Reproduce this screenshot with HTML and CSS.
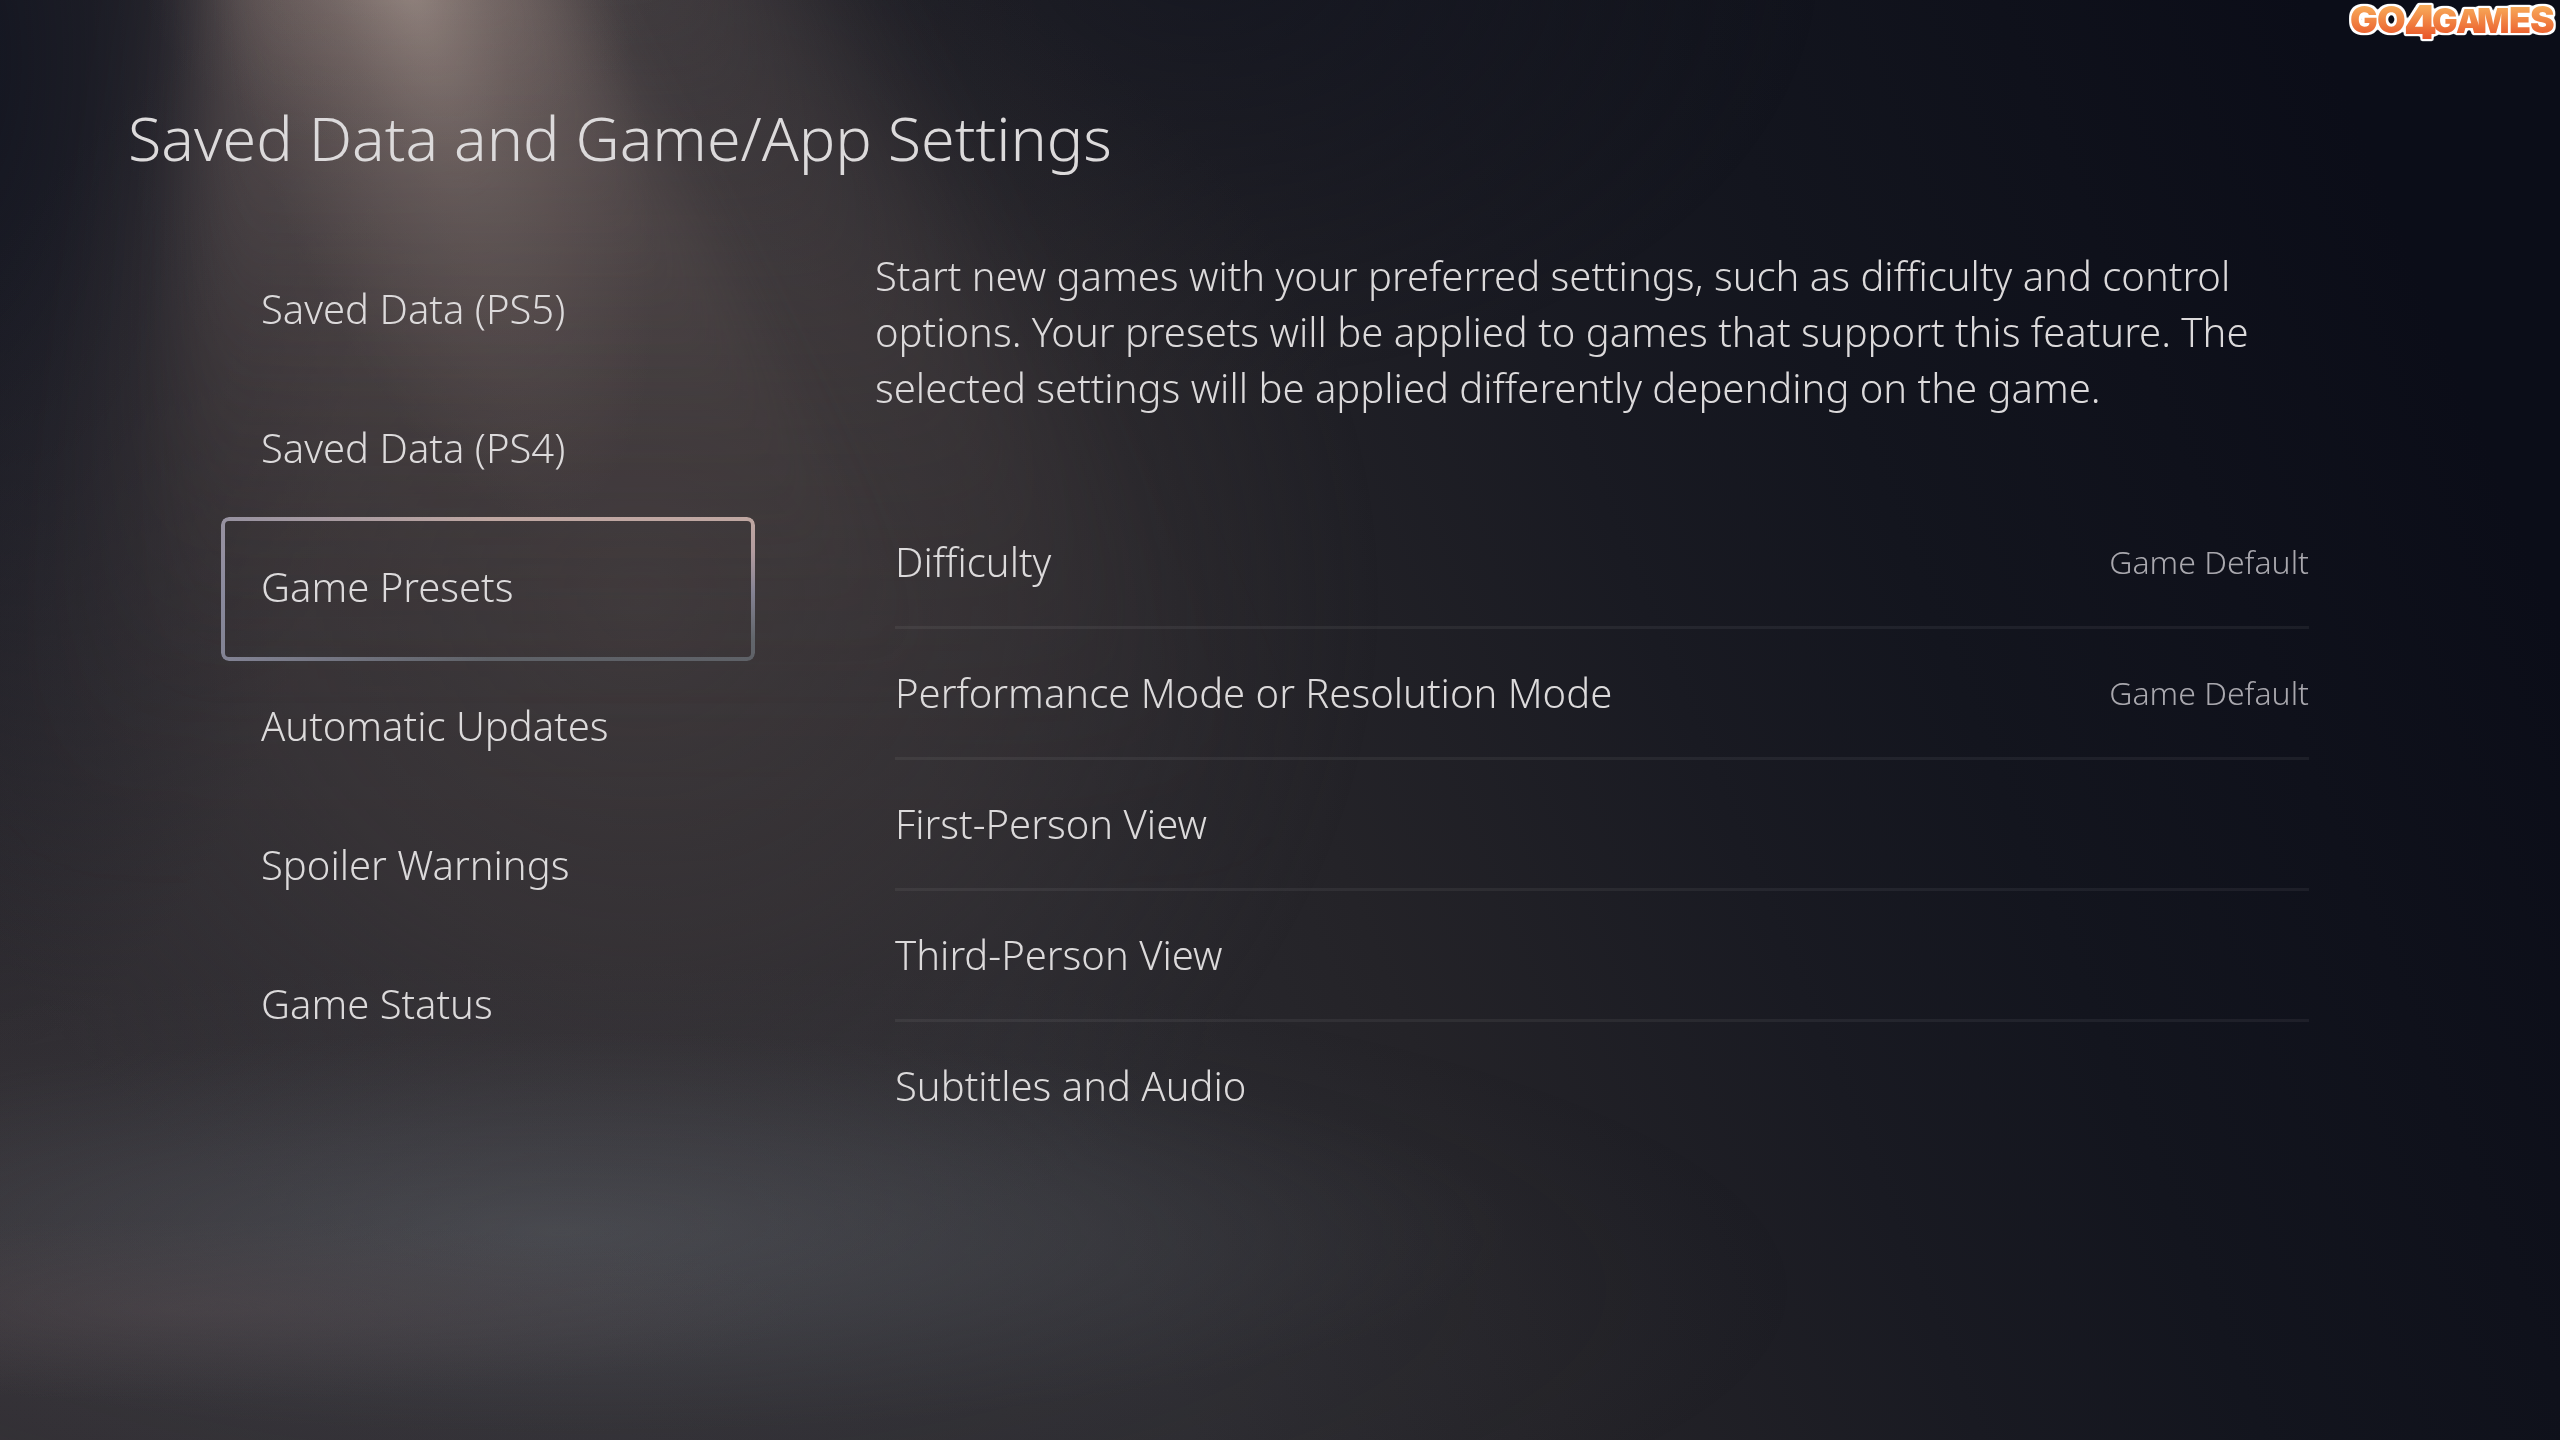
FILE: index.html
```html
<!DOCTYPE html>
<html lang="en">
<head>
<meta charset="utf-8">
<title>Saved Data and Game/App Settings</title>
<link rel="stylesheet" href="styles.css">
</head>
<body>
<svg class="backdrop" viewBox="0 0 2560 1440" preserveAspectRatio="none" aria-hidden="true">
  <defs>
    <filter id="soft" filterUnits="userSpaceOnUse" x="-600" y="-600" width="3600" height="2600" color-interpolation-filters="sRGB"><feGaussianBlur stdDeviation="32"/></filter>
    <filter id="wide" filterUnits="userSpaceOnUse" x="-600" y="-600" width="3600" height="2600" color-interpolation-filters="sRGB"><feGaussianBlur stdDeviation="60"/></filter>
    <linearGradient id="beam" x1="0" y1="0" x2="0" y2="1">
      <stop offset="0" stop-color="#a08c86" stop-opacity=".5"/>
      <stop offset=".4" stop-color="#8a7773" stop-opacity=".3"/>
      <stop offset=".7" stop-color="#6a5b57" stop-opacity=".14"/>
      <stop offset="1" stop-color="#5a5050" stop-opacity="0"/>
    </linearGradient>
    <radialGradient id="lamp"><stop offset="0" stop-color="#d2beb2" stop-opacity=".42"/><stop offset=".4" stop-color="#b8a298" stop-opacity=".22"/><stop offset="1" stop-color="#a08880" stop-opacity="0"/></radialGradient>
    <radialGradient id="floor"><stop offset="0" stop-color="#6a6f76" stop-opacity=".46"/><stop offset=".5" stop-color="#62666d" stop-opacity=".26"/><stop offset="1" stop-color="#585c62" stop-opacity="0"/></radialGradient>
    <radialGradient id="warm"><stop offset="0" stop-color="#5f5054" stop-opacity=".3"/><stop offset=".5" stop-color="#5a4c50" stop-opacity=".16"/><stop offset="1" stop-color="#5a4c4e" stop-opacity="0"/></radialGradient>
    <radialGradient id="haze"><stop offset="0" stop-color="#4a4242" stop-opacity=".55"/><stop offset=".5" stop-color="#443d3e" stop-opacity=".35"/><stop offset="1" stop-color="#38353a" stop-opacity="0"/></radialGradient>
    <radialGradient id="shade"><stop offset="0" stop-color="#10131f" stop-opacity=".9"/><stop offset=".5" stop-color="#12141f" stop-opacity=".5"/><stop offset="1" stop-color="#14151d" stop-opacity="0"/></radialGradient>
  </defs>
  <ellipse cx="-40" cy="60" rx="420" ry="1000" fill="url(#shade)"/>
  <ellipse cx="1200" cy="-40" rx="620" ry="420" fill="url(#shade)" opacity=".6"/>
  <ellipse cx="640" cy="600" rx="740" ry="700" fill="url(#haze)"/>
  <polygon points="240,-200 700,-200 1300,860 20,860" fill="url(#beam)" opacity=".5" filter="url(#wide)"/>
  <polygon points="220,-160 480,-160 960,700 160,700" fill="url(#beam)" opacity=".7" filter="url(#soft)"/>
  <ellipse cx="410" cy="-20" rx="200" ry="560" fill="url(#lamp)" transform="rotate(-16 410 -20)" opacity=".9"/>
  <ellipse cx="400" cy="-30" rx="260" ry="180" fill="url(#lamp)" opacity=".4"/>
  <ellipse cx="600" cy="1290" rx="1200" ry="330" fill="url(#floor)" opacity=".35"/>
  <ellipse cx="560" cy="1232" rx="950" ry="200" fill="url(#floor)" opacity=".75"/>
  <ellipse cx="180" cy="1310" rx="620" ry="90" fill="url(#warm)"/>
</svg>

<div class="screen">
  <header class="topbar">
    <h1 class="title">Saved Data and Game/App Settings</h1>
    <svg class="logo" viewBox="0 0 230 50" role="img" aria-label="GO4GAMES">
      <defs>
        <linearGradient id="orange" gradientUnits="userSpaceOnUse" x1="0" y1="4" x2="0" y2="38"><stop offset="0" stop-color="#f9b05c"/><stop offset="1" stop-color="#e9572a"/></linearGradient>
        <filter id="outline" x="-10%" y="-20%" width="120%" height="140%" color-interpolation-filters="sRGB">
          <feMorphology in="SourceAlpha" operator="dilate" radius="2" result="fat"/>
          <feGaussianBlur in="fat" stdDeviation="1" result="round"/>
          <feComponentTransfer in="round" result="edge"><feFuncA type="linear" slope="3" intercept="-0.8"/></feComponentTransfer>
          <feFlood flood-color="#fff"/><feComposite in2="edge" operator="in" result="white"/>
          <feMerge><feMergeNode in="white"/><feMergeNode in="SourceGraphic"/></feMerge>
        </filter>
      </defs>
      <text class="logo-text" filter="url(#outline)"><tspan x="20" y="33" font-size="37">G</tspan><tspan x="47" y="33" font-size="37">O</tspan><tspan x="74" y="39" font-size="47">4</tspan><tspan x="102" y="33" font-size="34">G</tspan><tspan x="126" y="33" font-size="33">A</tspan><tspan x="147" y="33" font-size="34">M</tspan><tspan x="179" y="33" font-size="36">E</tspan><tspan x="200" y="33" font-size="37">S</tspan></text>
    </svg>
  </header>

  <div class="layout">
    <nav class="menu" aria-label="Settings sections">
      <a class="menu-item" href="#ps5">Saved Data (PS5)</a>
      <a class="menu-item" href="#ps4">Saved Data (PS4)</a>
      <a class="menu-item selected" href="#presets" aria-current="page">Game Presets</a>
      <a class="menu-item" href="#updates">Automatic Updates</a>
      <a class="menu-item" href="#spoilers">Spoiler Warnings</a>
      <a class="menu-item" href="#status">Game Status</a>
    </nav>
    <main class="content">
      <p class="intro">Start new games with your preferred settings, such as difficulty and control options. Your presets will be applied to games that support this feature. The selected settings will be applied differently depending on the game.</p>
      <div class="rows">
        <button class="row" type="button"><span>Difficulty</span><span class="value">Game Default</span></button>
        <button class="row" type="button"><span>Performance Mode or Resolution Mode</span><span class="value">Game Default</span></button>
        <button class="row" type="button"><span>First-Person View</span></button>
        <button class="row" type="button"><span>Third-Person View</span></button>
        <button class="row" type="button"><span>Subtitles and Audio</span></button>
      </div>
    </main>
  </div>
</div>
</body>
</html>
```
FILE: styles.css
```css
* { box-sizing: border-box; }
body {
  margin: 0;
  min-height: 100vh;
  background: linear-gradient(68deg, #312e33 0%, #2f2d32 20%, #2b2a2f 38%, #242328 50%, #191a22 63%, #13151e 72%, #0f111b 82%, #0b0d18 92%, #0b0d18 100%);
  color: #dcdadb;
  font-family: "Noto Sans", "Open Sans", sans-serif;
  font-weight: 300;
  font-size: 40px;
}
.backdrop { position: fixed; inset: 0; width: 100%; height: 100%; z-index: -1; }
.topbar { display: flex; justify-content: space-between; align-items: flex-start; padding-left: 128px; }
.title { margin: 94px 0 0; font-size: 61px; line-height: 88px; font-weight: 300; }
.logo { width: 230px; height: 50px; overflow: visible; }
.logo-text { font-family: Inter, Lato, sans-serif; font-weight: 900; fill: url(#orange); }
.layout { display: flex; gap: 120px; padding: 58px 251px 0 221px; align-items: flex-start; }
.menu { display: flex; flex-direction: column; flex: 0 0 534px; }
.menu-item {
  position: relative; display: flex; align-items: center;
  height: 139px; padding: 0 0 2px 40px; color: inherit; text-decoration: none;
}
.selected::before {
  content: ""; position: absolute; inset: -1px 0 -4px; padding: 4px; border-radius: 8px;
  background:
    linear-gradient(90deg, rgba(140, 140, 160, .8) 0%, rgba(140, 140, 160, 0) 50%),
    linear-gradient(180deg, #c0a8a2 0%, #b39c9f 24%, #858394 52%, #62666c 84%, #5e6167 100%);
  mask: linear-gradient(#000 0 0) content-box exclude, linear-gradient(#000 0 0);
}
.content { flex: 1; min-width: 0; padding-top: 8px; }
.intro { margin: 0; line-height: 56px; }
.rows { display: flex; flex-direction: column; margin: 82px 0 0 20px; }
.row {
  display: flex; justify-content: space-between; align-items: center; height: 131px; padding: 0 0 2px;
  border: 0; border-bottom: 3px solid rgba(255, 255, 255, .06);
  background: none; color: inherit; font: inherit; text-align: left;
}
.row:last-child { border-bottom: 0; padding-bottom: 5px; }
.value { font-size: 32px; color: #a9a8ae; }
```
